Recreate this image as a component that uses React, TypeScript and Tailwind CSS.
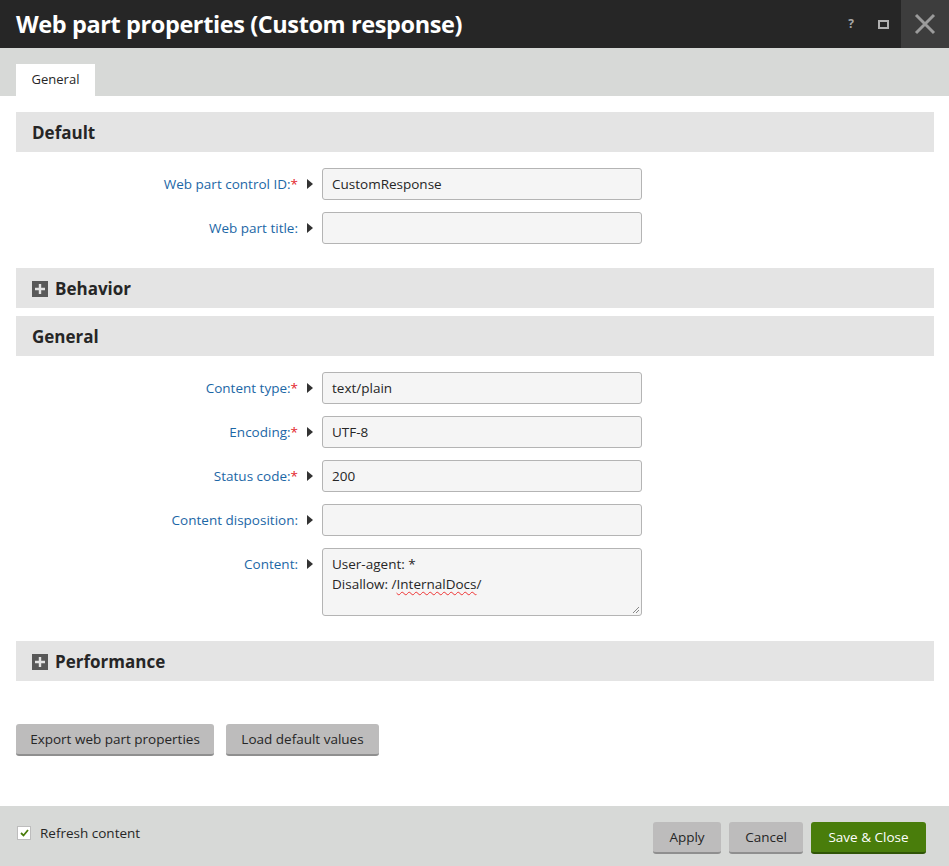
import React from "react";

const font = { fontFamily: '"Open Sans", "Liberation Sans", sans-serif' };

function Arrow() {
	return (
		<svg width="8" height="12" viewBox="0 0 8 12" className="shrink-0">
			<path d="M1 1 L7 6 L1 11 Z" fill="#333" />
		</svg>
	);
}

function Field({
	label,
	required,
	value,
	multiline,
}: {
	label: string;
	required?: boolean;
	value?: string;
	multiline?: boolean;
}) {
	return (
		<div className="flex items-start">
			<div className="w-[282px] shrink-0 flex justify-end pt-[6px] text-[13.5px] text-[#1c67a6]">
				{label}
				{required && <span className="text-[#e3242b]">*</span>}
			</div>
			<div className="w-[24px] shrink-0 flex justify-center pt-[10px]">
				<Arrow />
			</div>
			{multiline ? (
				<div className="relative w-[320px] h-[68px] bg-[#f5f5f5] border border-[#b4b4b4] rounded-[3px] px-[9px] pt-[5px] text-[13.5px] leading-[20px] text-[#262626]">
					<div>User-agent: *</div>
					<div>
						Disallow: /
						<span className="underline decoration-wavy decoration-[#e33] decoration-1 underline-offset-2">
							InternalDocs
						</span>
						/
					</div>
					<svg width="8" height="8" viewBox="0 0 8 8" className="absolute right-[1px] bottom-[1px]">
						<path d="M7 1 L1 7 M7 4 L4 7" stroke="#888" strokeWidth="1" />
					</svg>
				</div>
			) : (
				<div className="w-[320px] h-[32px] bg-[#f5f5f5] border border-[#b4b4b4] rounded-[3px] px-[9px] flex items-center text-[13.5px] text-[#262626]">
					{value}
				</div>
			)}
		</div>
	);
}

function Plus() {
	return (
		<span className="w-[16px] h-[16px] bg-[#595959] flex items-center justify-center mr-[7px]">
			<svg width="10" height="10" viewBox="0 0 10 10">
				<path d="M5 0 V10 M0 5 H10" stroke="#e4e4e4" strokeWidth="2.4" />
			</svg>
		</span>
	);
}

function Section({ title, collapsed }: { title: string; collapsed?: boolean }) {
	return (
		<div className="h-[40px] bg-[#e4e4e4] flex items-center pl-[16px] pt-[1px] text-[17px] font-bold text-[#262626]">
			{collapsed && <Plus />}
			{title}
		</div>
	);
}

function GrayButton({ children, className = "" }: { children: React.ReactNode; className?: string }) {
	return (
		<button
			type="button"
			className={`h-[32px] bg-[#bdbcbc] border-b-2 border-[#8f8f8f] rounded-[3px] text-[13.5px] text-[#262626] ${className}`}
		>
			{children}
		</button>
	);
}

export default function App() {
	return (
		<div style={font} className="w-[949px] h-[866px] flex flex-col bg-white overflow-hidden">
			<div className="h-[48px] bg-[#262626] flex items-center shrink-0">
				<div className="flex-1 pl-[16px] pt-[2px] text-white text-[23.5px] font-bold tracking-[-0.4px]">
					Web part properties (Custom response)
				</div>
				<div className="w-[36px] text-center text-[#a8a8a8] text-[12px] font-bold">?</div>
				<div className="w-[28px] flex justify-center">
					<span className="w-[11px] h-[9px] border-2 border-[#b0b0b0]" />
				</div>
				<div className="w-[48px] h-[48px] bg-[#3d3d3d] flex items-center justify-center ml-[4px]">
					<svg width="22" height="22" viewBox="0 0 22 22">
						<path d="M2 2 L20 20 M20 2 L2 20" stroke="#9b9b9b" strokeWidth="3" />
					</svg>
				</div>
			</div>

			<div className="h-[48px] bg-[#d7d9d7] flex items-end pl-[16px] shrink-0">
				<div className="h-[32px] w-[79px] bg-white flex items-center justify-center text-[13px] text-[#262626]">
					General
				</div>
			</div>

			<div className="flex-1 px-[16px] pt-[16px] pr-[15px]">
				<Section title="Default" />
				<div className="flex flex-col gap-[12px] pt-[16px] pb-[24px]">
					<Field label="Web part control ID:" required value="CustomResponse" />
					<Field label="Web part title:" />
				</div>
				<Section title="Behavior" collapsed />
				<div className="h-[8px]" />
				<Section title="General" />
				<div className="flex flex-col gap-[12px] pt-[16px] pb-[25px]">
					<Field label="Content type:" required value="text/plain" />
					<Field label="Encoding:" required value="UTF-8" />
					<Field label="Status code:" required value="200" />
					<Field label="Content disposition:" />
					<Field label="Content:" multiline />
				</div>
				<Section title="Performance" collapsed />
				<div className="flex gap-[12px] pt-[43px]">
					<GrayButton className="w-[198px]">Export web part properties</GrayButton>
					<GrayButton className="w-[153px]">Load default values</GrayButton>
				</div>
			</div>

			<div className="h-[60px] bg-[#d7d9d7] flex items-start justify-between pl-[17px] pr-[23px] shrink-0">
				<div className="flex items-center mt-[17px] text-[13.5px] text-[#262626]">
					<span className="w-[14px] h-[14px] bg-white border border-[#bdbdbd] flex items-center justify-center mr-[9px]">
						<svg width="9" height="8" viewBox="0 0 9 8">
							<path d="M1 4 L3.5 6.5 L8 1" stroke="#497d0b" strokeWidth="1.8" fill="none" />
						</svg>
					</span>
					Refresh content
				</div>
				<div className="flex gap-[8px] mt-[16px]">
					<GrayButton className="w-[68px]">Apply</GrayButton>
					<GrayButton className="w-[74px]">Cancel</GrayButton>
					<button
						type="button"
						className="h-[32px] w-[115px] bg-[#497d0b] border-b-2 border-[#2f5506] rounded-[3px] text-[13.5px] text-white"
					>
						Save &amp; Close
					</button>
				</div>
			</div>
		</div>
	);
}
